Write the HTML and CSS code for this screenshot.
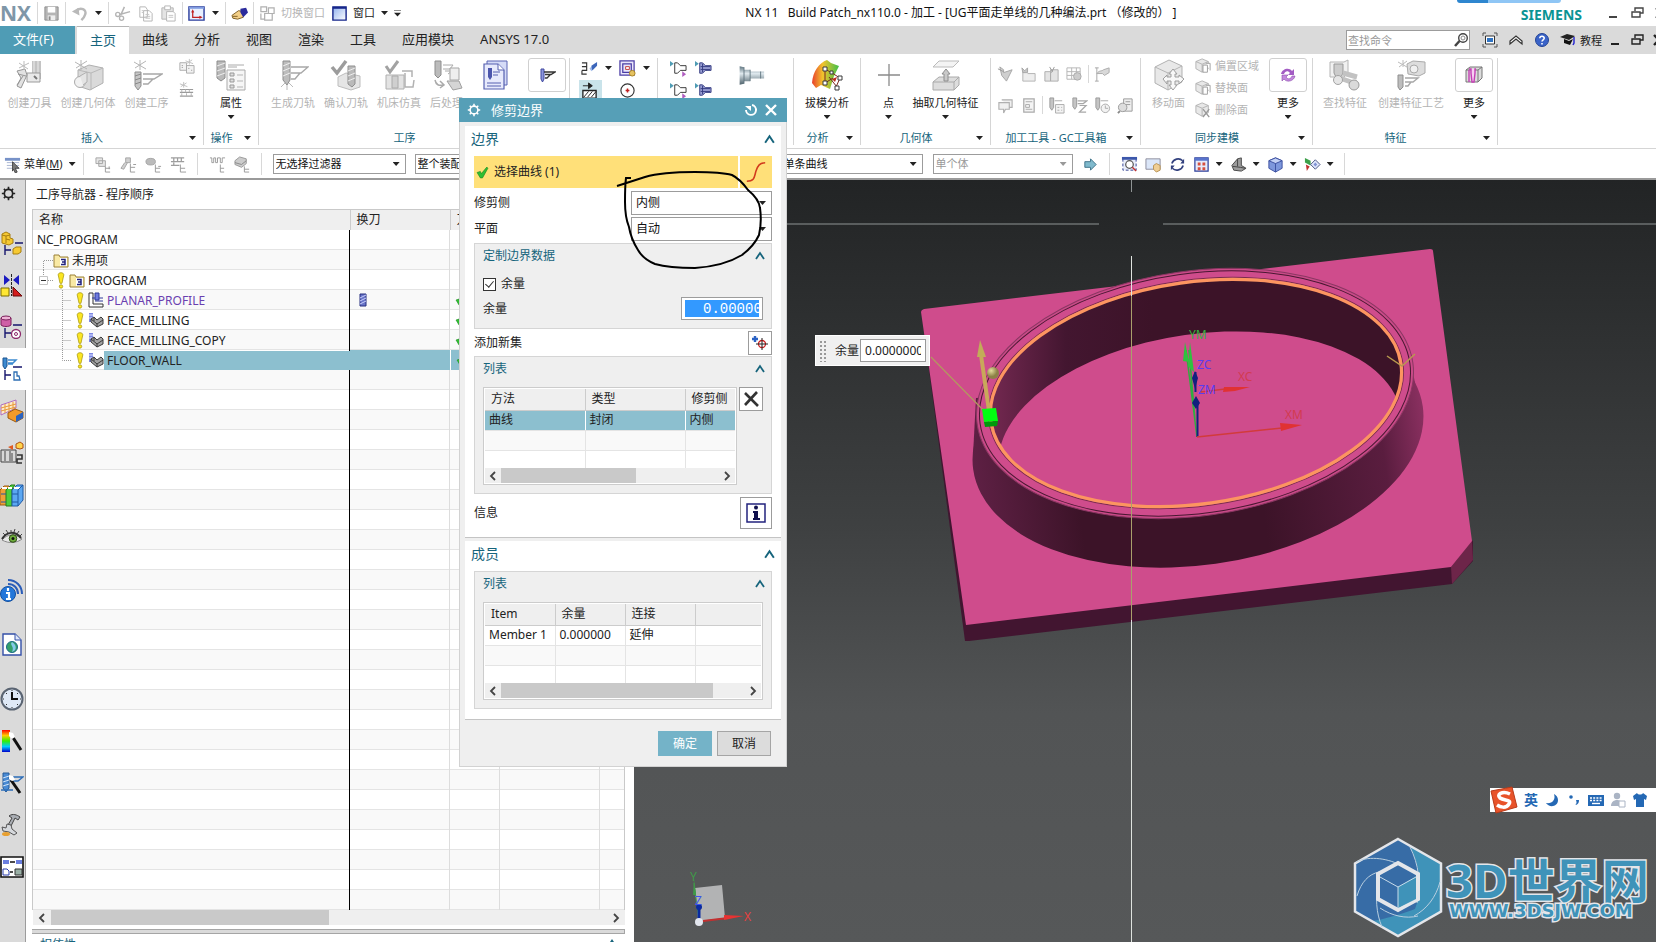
FILE: index.html
```html
<!DOCTYPE html>
<html lang="zh-CN">
<head>
    <meta charset="UTF-8">
    <meta name="viewport" content="width=device-width, initial-scale=1.0">
    <title>NX 11 - 加工</title>
    <link rel="stylesheet" href="styles.css">
</head>
<body>

<!-- Icon sprite -->
<svg class="sprite" aria-hidden="true">
    <defs>
        <linearGradient id="g-wall" x1="0" x2="1"><stop offset="0" stop-color="#5e2044"/><stop offset=".22" stop-color="#3c1328"/><stop offset=".62" stop-color="#3c1328"/><stop offset=".9" stop-color="#5a1d3f"/><stop offset="1" stop-color="#8a3060"/></linearGradient>
        <linearGradient id="g-inner" x1="0" x2="1"><stop offset="0" stop-color="#7a2b55"/><stop offset=".2" stop-color="#431630"/><stop offset=".4" stop-color="#3c1328"/><stop offset="1" stop-color="#3c1328"/></linearGradient>
        <linearGradient id="g-draft" x1="0" x2="1"><stop offset="0" stop-color="#e8402c"/><stop offset=".4" stop-color="#f2c32c"/><stop offset="1" stop-color="#3fc04a"/></linearGradient>
        <linearGradient id="g-rain" x1="0" y1="0" x2="0" y2="1"><stop offset="0" stop-color="#f00"/><stop offset=".25" stop-color="#fc0"/><stop offset=".5" stop-color="#3e0"/><stop offset=".75" stop-color="#0cf"/><stop offset="1" stop-color="#00c"/></linearGradient>
        <linearGradient id="g-steel" x1="0" y1="0" x2="0" y2="1"><stop offset="0" stop-color="#5f7580"/><stop offset=".4" stop-color="#dfe9ee"/><stop offset="1" stop-color="#4e626c"/></linearGradient>
        <linearGradient id="g-win" x1="0" y1="0" x2="1" y2="1"><stop offset="0" stop-color="#8fb0ee"/><stop offset="1" stop-color="#fff"/></linearGradient>
        <radialGradient id="g-ball" cx=".35" cy=".3"><stop offset="0" stop-color="#e4dc9c"/><stop offset="1" stop-color="#8d8146"/></radialGradient>
    </defs>

    <!-- title bar -->
    <symbol id="i-save" viewBox="0 0 18 18"><path d="M2 2h14v14H2z" fill="#b5b5b5" stroke="#8d8d8d"/><path d="M5 2h8v6H5z" fill="#fff"/><path d="M5 11h8v5H5z" fill="#eee"/><path d="M6 12h2v4H6z" fill="#8d8d8d"/></symbol>
    <symbol id="i-undo" viewBox="0 0 18 18"><path d="M5 7c5-6 12-2 10 3-.5 2-2 4-4 6" fill="none" stroke="#b9b9b9" stroke-width="2.600"/><path d="M1 7l7-4 1 8z" fill="#b9b9b9"/></symbol>
    <symbol id="i-cut" viewBox="0 0 18 18"><path d="M11 2L7 11M17 7L6 10" stroke="#b4b4b4" stroke-width="1.600" fill="none"/><circle cx="4" cy="10" r="2.200" fill="none" stroke="#b4b4b4" stroke-width="1.400"/><circle cx="8" cy="14" r="2.200" fill="none" stroke="#b4b4b4" stroke-width="1.400"/></symbol>
    <symbol id="i-copy" viewBox="0 0 18 18"><path d="M3 2h6l2 3v8H3zM7 6h6l3 3v8H7z" fill="#fff" stroke="#b4b4b4"/><path d="M9 10h4M9 12h5M9 14h5M5 6h2M5 8h2" stroke="#c4c4c4"/></symbol>
    <symbol id="i-paste" viewBox="0 0 18 18"><path d="M2 3h12v12H2z" fill="#e4e4e4" stroke="#b4b4b4"/><path d="M5 1h6v4H5z" fill="#fff" stroke="#b4b4b4"/><path d="M7 7h7l2 2v8H7z" fill="#fff" stroke="#b4b4b4"/><path d="M9 11h5M9 13h5" stroke="#c4c4c4"/></symbol>
    <symbol id="i-view" viewBox="0 0 18 18"><path d="M1 2h16v14H1z" fill="#e8f0ff" stroke="#2a3c9c" stroke-width="1.500"/><path d="M1 2h16v2H1z" fill="#7f9be0"/><path d="M5 6v7h8M4 8l1-2 1 2M12 12l2 1-2 1" fill="none" stroke="#c02020" stroke-width="1.300"/></symbol>
    <symbol id="i-hand" viewBox="0 0 18 18"><path d="M1 11l7-5 5 1v6l-6 2-5-1z" fill="#f3cf87" stroke="#7a5a20"/><path d="M10 4l6-1 2 5-5 5-3-5z" fill="#2b2b9c"/><path d="M2 12h5" stroke="#7a5a20"/></symbol>
    <symbol id="i-switch" viewBox="0 0 18 18"><path d="M2 2h6v5H2zM10 3h6v6h-6zM6 9h8v7H6zM2 9v6h4" fill="none" stroke="#b0b0b0" stroke-width="1.300"/></symbol>
    <symbol id="i-window" viewBox="0 0 18 18"><path d="M2 2h14v14H2z" fill="url(#g-win)" stroke="#16268a" stroke-width="1.500"/><path d="M2 2h14v2H2z" fill="#16268a"/></symbol>
    <symbol id="i-min" viewBox="0 0 14 14"><path d="M3 11h8" stroke="currentColor" stroke-width="2"/></symbol>
    <symbol id="i-restore" viewBox="0 0 14 14"><path d="M5 5V2h8v5h-3M2 6h8v5H2z" fill="none" stroke="currentColor" stroke-width="1.400"/></symbol>
    <symbol id="i-x" viewBox="0 0 14 14"><path d="M2 2l10 10M12 2L2 12" stroke="currentColor" stroke-width="2.400"/></symbol>
    <symbol id="i-find" viewBox="0 0 16 16"><circle cx="10" cy="6" r="4.300" fill="none" stroke="#444" stroke-width="1.400"/><circle cx="10" cy="6" r="2" fill="none" stroke="#888"/><path d="M6.500 9L2 14" stroke="#444" stroke-width="2.500"/></symbol>
    <symbol id="i-full" viewBox="0 0 16 16"><path d="M1 4V1h3M12 1h3v3M15 12v3h-3M4 15H1v-3" fill="none" stroke="#555"/><path d="M3.500 4h9v8h-9z" fill="#fff" stroke="#333"/><path d="M5 6h6v4H5z" fill="#2f74c4"/></symbol>
    <symbol id="i-up2" viewBox="0 0 16 16"><path d="M2 9l6-5 6 5v3L8 7l-6 5z" fill="#fff" stroke="#333" stroke-width="1.200"/></symbol>
    <symbol id="i-help" viewBox="0 0 16 16"><circle cx="8" cy="8" r="6.500" fill="#3a63c8" stroke="#234394"/><path d="M5.800 6.300c0-3 4.600-2.600 4.400 0-.1 1.500-2.200 1.500-2.200 3.200M8 11v1.600" fill="none" stroke="#fff" stroke-width="1.600"/></symbol>
    <symbol id="i-cap" viewBox="0 0 16 16"><path d="M0 5l7-3 8 2-6 4z" fill="#222"/><path d="M4 7v4l6 2 3-6-4 2z" fill="#111"/><path d="M14 5v6l-1 2" stroke="#2c2cd0" stroke-width="1.500" fill="none"/></symbol>

    <!-- ribbon, large -->
    <symbol id="i-tool" viewBox="0 0 32 32"><path d="M18 2h9v18h-9z" fill="#c4c4c4"/><path d="M20 2v12M24 2v12" stroke="#ececec"/><path d="M13 14h13v9H13z" fill="#e9e9e9" stroke="#9b9b9b"/><path d="M20 17l3 3" stroke="#777" stroke-width="2"/><path d="M3 12l8-2 2 6-6 13-4-2 4-8z" fill="#e2e2e2" stroke="#969696"/><path d="M4 15l8 2M3 26l6-9" stroke="#969696"/><path d="M10 2v9M5 4l9 6M15 4L5 9" stroke="#bbb"/></symbol>
    <symbol id="i-geom" viewBox="0 0 32 32"><path d="M6 11l11-5 14 3v15l-13 7L6 27z" fill="#dadada" stroke="#b0b0b0"/><path d="M6 11l13 3 12-5M19 14v17" stroke="#b8b8b8" fill="none"/><circle cx="8" cy="23" r="5.500" fill="#f1f1f1" stroke="#aaa"/><path d="M8 17l7-4v10l-4 3" fill="#e4e4e4" stroke="#b0b0b0"/><path d="M9 1v10M3 3l12 7M15 2L4 9" stroke="#b5b5b5"/></symbol>
    <symbol id="i-oper" viewBox="0 0 32 32"><path d="M4 13h6v14l-3 4-3-4z" fill="#c6c6c6" stroke="#8f8f8f"/><path d="M4 17l6-2M4 21l6-2M4 25l6-2" stroke="#888"/><path d="M12 15h19l-8 5H12M22 20l-5 5h-5" fill="none" stroke="#a8a8a8" stroke-width="1.400"/><path d="M9 1v10M3 3l12 7M15 2L4 9" stroke="#b5b5b5"/></symbol>
    <symbol id="i-attr" viewBox="0 0 32 32"><path d="M2 2h8v17l-4 3-4-3z" fill="#b9b9b9" stroke="#8c8c8c"/><path d="M2 7l8-3M2 12l8-3M2 17l8-3" stroke="#eee"/><path d="M13 6h16M13 8h9" stroke="#aaa"/><path d="M12 11h18v20H12z" fill="#f6f6f6" stroke="#aaa"/><path d="M15 14h4v3h-4zM15 20h4v3h-4zM15 26h4v3h-4z" fill="#ddd" stroke="#999"/><path d="M22 16h6M22 22h6M22 28h6" stroke="#b5b5b5"/></symbol>
    <symbol id="i-gen" viewBox="0 0 32 32"><path d="M6 2h7v19l-3 5-4-5z" fill="#bdbdbd" stroke="#8d8d8d"/><path d="M6 7l7-3M6 12l7-3M6 17l7-3" stroke="#eee"/><path d="M14 8h17l-7 6H14M23 14l-5 6h-4" fill="none" stroke="#a8a8a8" stroke-width="1.400"/><path d="M4 28l4-4M16 28l-4-4M10 26v5" stroke="#bbb"/></symbol>
    <symbol id="i-verify" viewBox="0 0 32 32"><path d="M8 18l8-4 14 3v11l-9 3-13-4z" fill="#e5e5e5" stroke="#bdbdbd"/><path d="M18 7h7v18l-3 3-4-3z" fill="#bababa" stroke="#8f8f8f"/><path d="M18 12l7-3M18 17l7-3M18 22l7-3" stroke="#eee"/><path d="M2 8l5 6 9-12" fill="none" stroke="#9c9c9c" stroke-width="3.500"/></symbol>
    <symbol id="i-sim" viewBox="0 0 32 32"><path d="M3 16h18v14H3z" fill="#e3e3e3" stroke="#b0b0b0"/><path d="M9 17h6v12H9z" fill="#cfcfcf" stroke="#aaa"/><path d="M22 14v14h8l1-7M19 12h10v6" stroke="#b2b2b2" fill="none" stroke-width="1.500"/><path d="M3 7l4 6 8-11" fill="none" stroke="#a2a2a2" stroke-width="3"/></symbol>
    <symbol id="i-post" viewBox="0 0 32 32"><path d="M4 2h6v14l-3 3-3-3z" fill="#bbb" stroke="#8d8d8d"/><path d="M12 6h10l-3 4h-7M14 12h7l-4 3" fill="none" stroke="#aaa"/><path d="M19 9h9v12h-9z" fill="#eee" stroke="#a5a5a5"/><path d="M16 22h12l3 7-9 2z" fill="#d5d5d5" stroke="#9f9f9f"/><path d="M4 21c1 5 4 6 8 5M9 22l4 4-4 3" fill="none" stroke="#aaa" stroke-width="1.500"/></symbol>
    <symbol id="i-report" viewBox="0 0 32 32"><path d="M8 2h20v24H8z" fill="#d5dbf7" stroke="#5a64b4"/><path d="M5 5h14l6 6v19H5z" fill="#e7eafc" stroke="#5660b0" stroke-width="1.200"/><path d="M19 5v6h6" fill="#fff" stroke="#5660b0"/><path d="M9 9h4v9l-2 3-2-3z" fill="#4c56ad"/><path d="M14 13h7M14 16h5M8 24h14M8 27h14" stroke="#5660b0"/></symbol>
    <symbol id="i-path" viewBox="0 0 18 18"><path d="M3 3h3v10l-1.500 3L3 13z" fill="#8c97dd" stroke="#4049a0"/><path d="M6 6h11l-4 2.500H7M12 9l-3 3H7" fill="none" stroke="#333" stroke-width="1.300"/></symbol>
    <symbol id="i-holder" viewBox="0 0 32 32"><path d="M3 6l5 1v3h7v2h16v8H15v3H8v3l-5 1z" fill="url(#g-steel)"/><path d="M8 7v19M15 10v13M27 12v8" stroke="#5d717b"/></symbol>
    <symbol id="i-draft" viewBox="0 0 32 32"><path d="M1 24C2 12 8 4 16 1l4 3 8 3-5 10-4 13-9-4-5 3z" fill="url(#g-draft)"/><path d="M14 10l7 4 8 5-4 9M14 10v14l8-5M18 18l8 10" fill="none" stroke="#7c2a1e"/><g fill="#fff" stroke="#3a3a3a"><path d="M12 8h4v4h-4zM19 12h3v3h-3zM12 22h4v4h-4zM27 17h4v4h-4zM24 27h4v4h-4z"/></g><path d="M21 20l5-2-2 5z" fill="#c02a1e"/></symbol>
    <symbol id="i-point" viewBox="0 0 32 32"><path d="M16 5v22M5 16h22" stroke="#8b8b8b" stroke-width="1.300"/></symbol>
    <symbol id="i-extract" viewBox="0 0 32 32"><path d="M9 2h20l-6 6H3z" fill="#f4f4f4" stroke="#bbb"/><path d="M3 23l6-5h20v8l-5 5H3z" fill="#ddd" stroke="#aaa"/><path d="M3 23h21l5-5M24 23v8" fill="none" stroke="#aaa"/><path d="M16 10l4 5h-2v7h-4v-7h-2z" fill="#c9c9c9" stroke="#8e8e8e"/></symbol>
    <symbol id="i-move" viewBox="0 0 32 32"><path d="M2 8l14-7 13 6v16l-14 8-13-7z" fill="#e8e8e8" stroke="#b1b1b1"/><path d="M2 8l13 6 14-7M15 14v17" fill="none" stroke="#b5b5b5"/><path d="M20 10l4 5h-2v3h4v-2l5 4-5 5v-3h-4v4h2l-4 5-4-5h2v-4h-4v3l-4-5 4-4v2h4v-3h-2z" fill="#f8f8f8" stroke="#9e9e9e"/></symbol>
    <symbol id="i-cycle" viewBox="0 0 18 18"><path d="M2 8c1-5 8-7 11-3l2-2v6H9l2-2C9 4 6 5 5 8z" fill="#a35cc4"/><path d="M16 10c-1 5-8 7-11 3l-2 2V9h6l-2 2c2 3 5 2 6-1z" fill="#c489dd" stroke="#8c4bad" stroke-width=".6"/></symbol>
    <symbol id="i-feat" viewBox="0 0 18 18"><path d="M1 4l4-3h12v11l-4 4H1z" fill="#dcdcdc" stroke="#777"/><path d="M1 4h12v12M13 4l4-3" fill="none" stroke="#777"/><path d="M4 3h2v4l1 9h2l1-9V3h1M4 16V4" fill="#f7d0f3" stroke="#c43fb4" stroke-width="1.400"/></symbol>
    <symbol id="i-findf" viewBox="0 0 32 32"><path d="M1 3h14l4-2v13l-4 4H1z" fill="#f1f1f1" stroke="#b5b5b5"/><path d="M5 5h9v9l-2 4H7l-2-4z" fill="#ccc" stroke="#999"/><path d="M8 18l14 5M14 14l14 4" stroke="#c2c2c2" stroke-width="5"/><circle cx="9" cy="21" r="4.500" fill="#e6e6e6" stroke="#a2a2a2"/><circle cx="25" cy="26" r="5" fill="#dadada" stroke="#9a9a9a"/></symbol>
    <symbol id="i-featp" viewBox="0 0 32 32"><path d="M12 5l6-3 12 1v11l-6 3-11-2z" fill="#ddd" stroke="#aaa"/><circle cx="19" cy="10" r="4" fill="#f0f0f0" stroke="#aaa"/><path d="M8 1v7M3 3l9 5M12 2L4 8" stroke="#bbb"/><path d="M3 16h5v12l-3 3-2-3z" fill="#bdbdbd" stroke="#8f8f8f"/><path d="M10 19h13l-5 4h-8M16 23l-3 4h-3" fill="none" stroke="#a8a8a8" stroke-width="1.400"/></symbol>

    <!-- ribbon, small -->
    <symbol id="s-copyg" viewBox="0 0 18 18"><path d="M2 5h7v8H2zM9 8h8v8H9z" fill="#f2f2f2" stroke="#aaa"/><path d="M4 8h1M4 10h1M11 11h1M14 13h1" stroke="#888"/><path d="M12 1v6M8 3l8 3M15 2L9 6" stroke="#c0c0c0"/></symbol>
    <symbol id="s-meth" viewBox="0 0 18 18"><path d="M2 9h14M2 12h14M2 16h14" stroke="#9a9a9a" stroke-width="1.300"/><path d="M4 9v3M8 9v3M12 9v3M4 13v3M9 13v3M14 13v3" stroke="#b5b5b5"/><path d="M6 1v6M2 3l8 3M9 2L3 6" stroke="#c0c0c0"/></symbol>
    <symbol id="s-edit" viewBox="0 0 18 18"><path d="M1 3h5v4H1M6 7v4H1M1 11v4h5" fill="none" stroke="#333" stroke-width="1.200"/><path d="M9 9l3-3 2 2-3 4z" fill="#9db9ea"/><path d="M11 6l6-4v4l-5 5z" fill="#3c66ba"/></symbol>
    <symbol id="s-spiral" viewBox="0 0 18 18"><path d="M1 1h15v15H1zM4 4h9v9H4z" fill="#e9e6fa" stroke="#4a3ca5" stroke-width="1.300"/><path d="M7 7h4v3H7z" fill="#fff" stroke="#c23a3a"/><circle cx="14" cy="14" r="3" fill="#e5c261" stroke="#a88225"/></symbol>
    <symbol id="s-hatch" viewBox="0 0 18 18"><path d="M2 4h9M8 1l4 3-4 3z" stroke="#222" fill="#222"/><path d="M2 9h14v8H2z" fill="#fff" stroke="#222" stroke-width="1.400"/><path d="M3 16l5-6M7 16l5-6M11 16l5-6" stroke="#222"/></symbol>
    <symbol id="s-target" viewBox="0 0 18 18"><circle cx="9" cy="9" r="7" fill="#fff" stroke="#333" stroke-width="1.200"/><path d="M7 9h4M9 7v4" stroke="#c02020" stroke-width="1.600"/></symbol>
    <symbol id="s-cut1" viewBox="0 0 18 18"><path d="M5 3h3l3 3h6v5h-6l-3 3H5z" fill="#fff" stroke="#333"/><path d="M0 1l4 3-4 3z" fill="#4f9cb4"/><path d="M13 12l4 3-4 3z" fill="#b05cc0"/></symbol>
    <symbol id="s-cut2" viewBox="0 0 18 18"><path d="M5 3h3l3 3h6v5h-6l-3 3H5z" fill="#9a9fd4" stroke="#333a80"/><path d="M6 7h10M6 10h10M8 4v9" stroke="#333a80"/><path d="M0 1l4 3-4 3z" fill="#4f9cb4"/></symbol>
    <symbol id="s-g1" viewBox="0 0 18 18"><path d="M3 1l4 3v3l9-3-6 12-5-6z" fill="#cfcfcf" stroke="#a5a5a5"/><path d="M1 3l6 3" fill="none" stroke="#999"/></symbol>
    <symbol id="s-g2" viewBox="0 0 18 18"><path d="M3 6v10h13V8H8" fill="#eee" stroke="#b2b2b2"/><path d="M2 2l3 3 3-3v5H3z" fill="#c4c4c4" stroke="#a5a5a5"/></symbol>
    <symbol id="s-g3" viewBox="0 0 18 18"><path d="M2 6h6v10H2zM8 4h8v12H8z" fill="#e4e4e4" stroke="#adadad"/><path d="M7 1l3 5M12 1l-3 6" stroke="#999"/></symbol>
    <symbol id="s-g4" viewBox="0 0 18 18"><path d="M1 2h14v12H1zM1 6h14M1 10h14M6 2v12M11 2v12" fill="none" stroke="#b5b5b5"/><circle cx="12" cy="11" r="4" fill="#ccc" stroke="#aaa"/></symbol>
    <symbol id="s-g5" viewBox="0 0 18 18"><path d="M3 2v14M1 2h4M1 16h4" stroke="#a5a5a5" fill="none"/><path d="M3 8c3-4 5-2 7-4l6-2v5l-5 3-2-2z" fill="#d9d9d9" stroke="#aaa"/></symbol>
    <symbol id="s-g6" viewBox="0 0 18 18"><path d="M5 3h11v8h-3M2 6h11v7H9l-2 4v-4H2z" fill="#f0f0f0" stroke="#b0b0b0" stroke-width="1.200"/></symbol>
    <symbol id="s-g7" viewBox="0 0 18 18"><path d="M4 2h11v14H4z" fill="#f4f4f4" stroke="#aaa" stroke-width="1.300"/><path d="M6 5h7M6 8h4v3H6zM6 13h7" stroke="#aaa" fill="none"/></symbol>
    <symbol id="s-g8" viewBox="0 0 18 18"><path d="M2 1h4v10l-2 3-2-3z" fill="#c4c4c4" stroke="#999"/><path d="M8 8h9v9H8z" fill="#f3f3f3" stroke="#aaa"/><path d="M10 11h2M14 11h1M10 14h2M14 14h1M7 4h8" stroke="#aaa"/></symbol>
    <symbol id="s-g9" viewBox="0 0 18 18"><path d="M2 1h4v10l-2 3-2-3z" fill="#c4c4c4" stroke="#999"/><circle cx="12" cy="12" r="4.500" fill="#f3f3f3" stroke="#aaa"/><path d="M12 9v3h3M7 4h8" stroke="#aaa" fill="none"/></symbol>
    <symbol id="s-g10" viewBox="0 0 18 18"><path d="M7 2h9v13H7z" fill="#eee" stroke="#999"/><path d="M9 5h5M9 8h5" stroke="#999"/><circle cx="6" cy="11" r="4.500" fill="#ddd" stroke="#9a9a9a"/><path d="M3 15l-2 2" stroke="#888" stroke-width="2"/></symbol>
    <symbol id="s-g11" viewBox="0 0 18 18"><path d="M2 1h4v9l-2 3-2-3z" fill="#c4c4c4" stroke="#999"/><path d="M7 4h10l-4 3H7M9 9h7l-4 4M12 13l-3 3h7" fill="none" stroke="#a8a8a8" stroke-width="1.300"/></symbol>
    <symbol id="s-face" viewBox="0 0 18 18"><path d="M1 4l7-3 7 3v8l-7 4-7-4z" fill="#e8e8e8" stroke="#b0b0b0"/><path d="M1 4l7 3 7-3M8 7v9" fill="none" stroke="#b0b0b0"/><path d="M9 8h5v8H9zM12 6h5v8" fill="#fff" stroke="#999"/></symbol>
    <symbol id="s-facex" viewBox="0 0 18 18"><path d="M1 4l7-3 7 3v8l-7 4-7-4z" fill="#e8e8e8" stroke="#b0b0b0"/><path d="M1 4l7 3 7-3M8 7v9" fill="none" stroke="#b0b0b0"/><path d="M9 8l7 9M16 8l-7 9" stroke="#999" stroke-width="1.500"/></symbol>

    <!-- selection bar -->
    <symbol id="s-menu" viewBox="0 0 18 18"><path d="M1 2h16v3H1z" fill="#7792c8"/><path d="M3 7h13M3 10h13M3 13h13" stroke="#a8b4d0"/><path d="M9 6l7 7h-4l2 4-2 1-2-4-1 2z" fill="#777" stroke="#333" stroke-width=".8"/></symbol>
    <symbol id="s-tree1" viewBox="0 0 18 18"><path d="M1 2h7v6H1zM4 5h7v6H4z" fill="#e6e6e6" stroke="#a5a5a5"/><path d="M11 11v6h5M11 13h5M15 11v3" fill="none" stroke="#999"/></symbol>
    <symbol id="s-tree2" viewBox="0 0 18 18"><path d="M6 2h5v5H6zM5 7l-4 6 3 1 4-7" fill="#d0d0d0" stroke="#a5a5a5"/><path d="M11 8v9h5M11 12h5M14 9h3" fill="none" stroke="#999"/></symbol>
    <symbol id="s-tree3" viewBox="0 0 18 18"><ellipse cx="6" cy="6" rx="5" ry="3.500" fill="#bbb" stroke="#a5a5a5"/><path d="M11 9v8h5M11 13h5M14 11h3" fill="none" stroke="#999"/></symbol>
    <symbol id="s-tree4" viewBox="0 0 18 18"><path d="M1 2h14M1 6h14M1 10h9M4 2v4M8 2v4M12 2v4M4 7v3" fill="none" stroke="#9d9d9d" stroke-width="1.300"/><path d="M11 9v8h6M11 13h5" fill="none" stroke="#999"/></symbol>
    <symbol id="s-wave" viewBox="0 0 18 18"><path d="M1 2h2v5h2V2h2v5h2V2h3v5h2V2h3" fill="none" stroke="#999"/><path d="M12 9v8h4M12 13h4" fill="none" stroke="#999"/></symbol>
    <symbol id="s-stack" viewBox="0 0 18 18"><path d="M1 5l5-4 7 2v5l-5 4-7-3z" fill="#ccc" stroke="#999"/><path d="M1 7l7 2 5-4" fill="none" stroke="#888"/><path d="M11 11v6h5M11 14h5" fill="none" stroke="#999"/></symbol>
    <symbol id="s-go" viewBox="0 0 18 18"><path d="M3 6h6V3l6 6-6 6v-3H3z" fill="#7fb9cc" stroke="#3e7288"/></symbol>
    <symbol id="s-fit" viewBox="0 0 18 18"><path d="M2 2h14v13H2z" fill="#e7ecfa" stroke="#2f3f90" stroke-dasharray="3 2"/><path d="M1 1h16v3H1z" fill="#3c57ab"/><circle cx="9" cy="9" r="4" fill="#fff" stroke="#555" stroke-width="1.300"/><path d="M12 12l4 4" stroke="#c03030" stroke-width="1.500"/></symbol>
    <symbol id="s-pan" viewBox="0 0 18 18"><path d="M1 3h15v11H1z" fill="#dbe6f8" stroke="#8b8b9b"/><path d="M9 10l3-2 4 2v5l-4 2-3-3z" fill="#efce94" stroke="#b89252"/></symbol>
    <symbol id="s-rot" viewBox="0 0 18 18"><path d="M14.500 5A7 7 0 0 0 3 8M3.500 13A7 7 0 0 0 15 10" fill="none" stroke="#32407e" stroke-width="1.700"/><path d="M16 3v5h-4zM2 15v-5h4z" fill="#32407e"/></symbol>
    <symbol id="s-tile" viewBox="0 0 18 18"><path d="M2 2h14v14H2z" fill="#e6ecfc" stroke="#2c3f9b" stroke-width="1.300"/><path d="M2 2h14v3H2z" fill="#5873cc"/><path d="M5 7h3v3H5zM10 7h3v3h-3zM5 12h3v3H5zM10 12h3v3h-3z" fill="#d65040"/></symbol>
    <symbol id="s-shade" viewBox="0 0 18 18"><path d="M2 10l6-7 4-1v8l5 3-5 3-8-1z" fill="#9d9d9d" stroke="#444"/><path d="M3 11l8 1 5 1M8 3v8" fill="none" stroke="#444"/></symbol>
    <symbol id="s-cube" viewBox="0 0 18 18"><path d="M2 5l7-3 7 3v8l-7 4-7-4z" fill="#7d97dc" stroke="#3b50a0"/><path d="M2 5l7 3 7-3-7-3z" fill="#c3d1f5" stroke="#3b50a0"/><path d="M9 8v9" stroke="#3b50a0"/></symbol>
    <symbol id="s-clip" viewBox="0 0 18 18"><path d="M1 2l6 3v5L1 7z" fill="#3ca04a"/><path d="M2 9l4 2-3 5z" fill="#c03030"/><path d="M7 9l5-5 5 5-5 5z" fill="#dfe6fb" stroke="#46537f"/><path d="M10 9l2-2 2 2-2 2z" fill="#7f92d3"/></symbol>

    <!-- resource bar -->
    <symbol id="r-gear" viewBox="0 0 18 18"><circle cx="9" cy="9" r="5" fill="none" stroke="currentColor" stroke-width="2"/><path d="M9 1v3M9 14v3M1 9h3M14 9h3M3.500 3.500l2 2M12.500 12.500l2 2M14.500 3.500l-2 2M5.500 12.500l-2 2" stroke="currentColor" stroke-width="2"/></symbol>
    <symbol id="r-asm" viewBox="0 0 24 24"><path d="M2 3l4-2 4 2v4l3 1v4l-4 2-7-2z" fill="#f6c933" stroke="#a77e10"/><path d="M2 4l4 1 4-1M6 5v7M6 8l4 1" stroke="#a77e10" fill="none"/><path d="M15 12h8M5 14v10M5 19h6" stroke="#16166e" stroke-width="1.400"/><path d="M13 18l3-2h5v5l-3 2h-5z" fill="#f6c933" stroke="#a77e10"/></symbol>
    <symbol id="r-cons" viewBox="0 0 24 24"><path d="M4 2l6 5-6 5zM19 2l-6 5 6 5z" fill="#1a1ac0"/><path d="M11.500 1v22" stroke="#222" stroke-dasharray="3 1"/><path d="M1 15h8v8H1z" fill="#ffe733" stroke="#7a6b00"/><path d="M13 14l9 9h-9z" fill="#d41c1c" stroke="#6a0909"/></symbol>
    <symbol id="r-part" viewBox="0 0 24 24"><path d="M1 3v7c2 2 8 2 10 0V3z" fill="#cf5fa6" stroke="#7a1f5a"/><ellipse cx="6" cy="3" rx="5" ry="2" fill="#eeb3d6" stroke="#7a1f5a"/><path d="M13 10h9M5 13v10M5 18h6" stroke="#16166e" stroke-width="1.400"/><circle cx="16" cy="19" r="4.500" fill="#fff" stroke="#8c2a6c" stroke-width="1.300"/><circle cx="16" cy="19" r="1.500" fill="none" stroke="#8c2a6c"/></symbol>
    <symbol id="r-op" viewBox="0 0 24 24"><path d="M3 1h4v8l-2 3-2-3z" fill="#3c8ad0" stroke="#1d5590"/><path d="M8 3h8l-3 3H8M13 7H8" stroke="#3c8ad0" stroke-width="1.500" fill="none"/><path d="M13 10h9M5 13v10M5 18h6" stroke="#16166e" stroke-width="1.400"/><path d="M14 15v8h6l-1-4h-2v-4z" fill="#fff" stroke="#2f6fb4" stroke-width="1.300"/></symbol>
    <symbol id="r-mach" viewBox="0 0 24 24"><path d="M1 6l15-5v8L1 16z" fill="#fdeccb" stroke="#b06ec0"/><path d="M1 9l15-4M1 12l15-4M5 5v9M9 4v9M13 3v8" stroke="#e89a3a"/><path d="M8 14l7-4 8 3v6l-7 4-8-4z" fill="#f39a2a" stroke="#9b5a10"/><path d="M16 17l7-4v6l-7 4z" fill="#2a63c0"/></symbol>
    <symbol id="r-cell" viewBox="0 0 24 24"><path d="M1 9h15v12H1z" fill="#d8d8d8" stroke="#444"/><path d="M5 10v10M10 10v10M12 12v8" stroke="#444"/><path d="M17 14h5v4h-5v4h5" fill="none" stroke="#333" stroke-width="1.600"/><path d="M16 3l4-2 3 2v4l-3 1-4-1z" fill="#ffd34a" stroke="#b05010"/><path d="M8 6l5-2v5z" fill="#e05a20"/></symbol>
    <symbol id="r-book" viewBox="0 0 24 24"><path d="M0 7l4-4h5v19H0z" fill="#f0a038" stroke="#9b5a10"/><path d="M6 7l5-5h4l-3 4v17H6z" fill="#4ccf3c" stroke="#247a1a"/><path d="M12 7l5-5h6v15l-5 6h-6z" fill="#5ba7f2" stroke="#1f5aa6"/><path d="M2 5h5M8 5h4M14 5h6" stroke="#fff" stroke-width="2"/><path d="M18 7l5-5M18 7v16M12 11h6M12 19h6M1 11h5M1 19h5" stroke="#1f5aa6" fill="none"/></symbol>
    <symbol id="r-eye" viewBox="0 0 24 24"><path d="M2 15c5-6 13-7 20-1-5 4-13 5-20 1z" fill="#e8e8e8" stroke="#888"/><circle cx="13" cy="13.500" r="3.800" fill="#6fae3c" stroke="#2f4d18"/><circle cx="13" cy="13.500" r="1.500" fill="#111"/><path d="M2 14C7 6 15 6 21 13" fill="none" stroke="#333" stroke-width="2"/><path d="M5 10L3 8M8 8L6 5M11 7V5M14 7l1-3M17 9l2-3M20 11l2-2" stroke="#444"/></symbol>
    <symbol id="r-info" viewBox="0 0 24 24"><circle cx="8" cy="15" r="7.500" fill="#2477da" stroke="#1450a0"/><path d="M8 9v3M6 14h3v6M6 20h5" stroke="#fff" stroke-width="2.200" fill="none"/><path d="M8 5c6 0 10 4 10 10M8 1c8 0 14 6 14 14" fill="none" stroke="#2a5cb8" stroke-width="2"/></symbol>
    <symbol id="r-web" viewBox="0 0 24 24"><path d="M3 1h12l6 6v15H3z" fill="#fff" stroke="#3450a8" stroke-width="1.400"/><path d="M15 1v6h6" fill="#dfe8fb" stroke="#3450a8"/><circle cx="12" cy="14" r="5.500" fill="#35a06a" stroke="#1b6a86"/><path d="M12 9c-3 3 3 4 0 10 6-2 4-8 0-10z" fill="#86c9ea"/></symbol>
    <symbol id="r-clock" viewBox="0 0 24 24"><circle cx="12" cy="12" r="10.500" fill="#dfe9f6" stroke="#5a6472" stroke-width="2"/><path d="M12 5v7h6" fill="none" stroke="#111" stroke-width="2"/><path d="M12 3v1M12 20v1M3 12h1M20 12h1M6 6l1 1M18 18l-1-1M6 18l1-1M18 6l-1 1" stroke="#333"/></symbol>
    <symbol id="r-color" viewBox="0 0 24 24"><path d="M2 1h8v22H2z" fill="url(#g-rain)"/><path d="M12 7l9 14" stroke="#111" stroke-width="3"/><path d="M9 3l4 1 2 4-3 2-3-3z" fill="#fff"/></symbol>
    <symbol id="r-wiz" viewBox="0 0 24 24"><path d="M3 2h6v15l-3 4-3-4z" fill="#4a8bd4" stroke="#245a98"/><path d="M3 7l6-2M3 11l6-2M3 15l6-2" stroke="#cfe3f8"/><path d="M10 6h13l-5 4h-8M1 19h12" stroke="#2d6db8" stroke-width="1.400" fill="none"/><path d="M11 9l9 13" stroke="#111" stroke-width="3"/><path d="M9 4l4 1 2 4-3 1-3-2z" fill="#fff"/></symbol>
    <symbol id="r-tools" viewBox="0 0 24 24"><path d="M9 3c4-3 8-1 11 1l-2 3-3-2-4 8-3-1 4-7z" fill="#a9adb3" stroke="#444"/><path d="M2 14l4 1 1-4 4 1 1 4 5 4-3 2-5-3-6-1z" fill="#d5d8dc" stroke="#555"/><ellipse cx="6" cy="21" rx="4" ry="2" fill="#e8a030"/></symbol>
    <symbol id="r-layout" viewBox="0 0 24 24"><path d="M1 2h22v20H1z" fill="#fff" stroke="#111" stroke-width="1.600"/><path d="M3 5h6v4H3zM16 5h6v4h-6z" fill="#6b7fe0"/><path d="M10 7h5M10 17h3" stroke="#111" stroke-width="1.400"/><path d="M3 14h4l2 2v4H3z" fill="#fff" stroke="#2b3fae"/><path d="M15 14h7v6h-7z" fill="#9ab0a6" stroke="#333"/></symbol>

    <!-- tree -->
    <symbol id="t-warn" viewBox="0 0 8 18"><path d="M1 3c0-3 6-3 6 0L5 12H3z" fill="#fbe622" stroke="#a8960a" stroke-width=".8"/><circle cx="4" cy="15.300" r="1.800" fill="#fbe622" stroke="#a8960a" stroke-width=".8"/></symbol>
    <symbol id="t-folder" viewBox="0 0 16 16"><path d="M1 3h5l1 2h8v10H1z" fill="#f9e9a4" stroke="#9a8038"/><path d="M7 6h7v8H7z" fill="#fff"/><path d="M8 7.500h4v5H8M9 10h3" fill="none" stroke="#23237e" stroke-width="1.500"/></symbol>
    <symbol id="t-planar" viewBox="0 0 16 16"><path d="M1 1v14h14v-3H5V1z" fill="#fff" stroke="#333"/><path d="M7 1h4v7H7z" fill="#6f7be0" stroke="#2f3a9a"/><path d="M4 6h3M11 6h4M7 9h8" stroke="#2f3a9a"/></symbol>
    <symbol id="t-face" viewBox="0 0 16 16"><path d="M1 1h4v9H1z" fill="#7d88e4"/><path d="M1 3h4M1 6h4" stroke="#dfe3ff"/><path d="M3 7l3-2 3 3 4-3 2 2v5l-6 3-6-5z" fill="#a3a3a3" stroke="#3a3a3a"/><path d="M3 7l6 5 6-4M9 12v3M6 5v4" fill="none" stroke="#3a3a3a"/></symbol>
    <symbol id="t-chg" viewBox="0 0 8 14"><path d="M1 1h6v12H1z" fill="#6874c8" stroke="#262f7e"/><path d="M1 5l6-3M1 8l6-3M1 11l6-3" stroke="#c9cffb"/></symbol>
    <symbol id="t-ok" viewBox="0 0 12 12"><path d="M1 6l3-1 1 2 5-6 1 1-5 9H4z" fill="#2fbf32" stroke="#1c8a20" stroke-width=".6"/></symbol>

    <!-- dialog -->
    <symbol id="d-up" viewBox="0 0 12 12"><path d="M2 9l4-6 4 6" fill="none" stroke="#16647c" stroke-width="1.800"/></symbol>
    <symbol id="d-left" viewBox="0 0 12 12"><path d="M8 2L4 6l4 4" fill="none" stroke="#444" stroke-width="1.800"/></symbol>
    <symbol id="d-right" viewBox="0 0 12 12"><path d="M4 2l4 4-4 4" fill="none" stroke="#444" stroke-width="1.800"/></symbol>
    <symbol id="d-reset" viewBox="0 0 14 14"><path d="M8 2a5 5 0 1 1-6 5" fill="none" stroke="#fff" stroke-width="1.900"/><path d="M1 3h6v5z" fill="#fff"/></symbol>
    <symbol id="d-curve" viewBox="0 0 24 24"><path d="M2 22c9 0 8-5 10-11S16 2 22 2" fill="none" stroke="#d23a1c" stroke-width="1.700"/></symbol>
    <symbol id="d-add" viewBox="0 0 18 18"><path d="M1 5h6M4 2v6" stroke="#2a62c4" stroke-width="2.400"/><circle cx="11" cy="10" r="3.500" fill="none" stroke="#d02020" stroke-width="1.300"/><path d="M5 10h12M11 4v12" stroke="#222"/></symbol>
    <symbol id="d-info" viewBox="0 0 20 20"><path d="M1 1h18v18H1z" fill="#fff" stroke="#23237e" stroke-width="1.500"/><circle cx="10" cy="4.600" r="2" fill="#10104e"/><path d="M7 8h5v7h2v2H7v-2h1v-5H7z" fill="#10104e"/></symbol>
    <symbol id="d-del" viewBox="0 0 18 18"><path d="M3 3l13 13M15 2L3 15" stroke="#333" stroke-width="2.600"/></symbol>
</svg>

<!-- Title bar -->
<header class="titlebar">
    <span class="brand">NX</span>
    <span class="sep"></span>
    <button class="qa" aria-label="保存"><svg><use href="#i-save"/></svg></button>
    <span class="sep"></span>
    <button class="qa" aria-label="撤销"><svg><use href="#i-undo"/></svg></button>
    <span class="caret wide"></span>
    <span class="sep"></span>
    <button class="qa" aria-label="剪切"><svg><use href="#i-cut"/></svg></button>
    <button class="qa" aria-label="复制"><svg><use href="#i-copy"/></svg></button>
    <button class="qa" aria-label="粘贴"><svg><use href="#i-paste"/></svg></button>
    <span class="sep"></span>
    <button class="qa" aria-label="视图"><svg><use href="#i-view"/></svg></button>
    <span class="caret wide"></span>
    <span class="sep"></span>
    <button class="qa" aria-label="触控"><svg><use href="#i-hand"/></svg></button>
    <span class="sep"></span>
    <button class="qa text dim"><svg><use href="#i-switch"/></svg>切换窗口</button>
    <button class="qa text"><svg><use href="#i-window"/></svg>窗口</button>
    <span class="caret"></span>
    <span class="caret bar"></span>
    <h1>NX 11 &nbsp; Build Patch_nx110.0 - 加工 - [UG平面走单线的几种编法.prt （修改的） ]</h1>
    <span class="siemens">SIEMENS</span>
    <span class="winbtns">
        <button aria-label="最小化"><svg><use href="#i-min"/></svg></button>
        <button aria-label="还原"><svg><use href="#i-restore"/></svg></button>
        <button aria-label="关闭"><svg><use href="#i-x"/></svg></button>
    </span>
    <span class="progress"></span>
</header>

<!-- Tabs -->
<nav class="tabs">
    <a href="#" class="file">文件(F)</a>
    <a href="#" class="active">主页</a>
    <a href="#">曲线</a>
    <a href="#">分析</a>
    <a href="#">视图</a>
    <a href="#">渲染</a>
    <a href="#">工具</a>
    <a href="#">应用模块</a>
    <a href="#">ANSYS 17.0</a>
    <div class="tabs-right">
        <label class="search"><input type="text" placeholder="查找命令" aria-label="查找命令"><svg><use href="#i-find"/></svg></label>
        <button aria-label="全屏"><svg><use href="#i-full"/></svg></button>
        <button aria-label="最小化功能区"><svg><use href="#i-up2"/></svg></button>
        <button aria-label="帮助"><svg><use href="#i-help"/></svg></button>
        <button class="tutorial"><svg><use href="#i-cap"/></svg>教程</button>
        <span class="winbtns">
            <button aria-label="最小化"><svg><use href="#i-min"/></svg></button>
            <button aria-label="还原"><svg><use href="#i-restore"/></svg></button>
            <button aria-label="关闭"><svg><use href="#i-x"/></svg></button>
        </span>
    </div>
</nav>

<!-- Ribbon -->
<div class="ribbon">
    <section class="group g-insert">
        <div class="tools">
            <button class="big dim"><svg><use href="#i-tool"/></svg>创建刀具</button>
            <button class="big dim"><svg><use href="#i-geom"/></svg>创建几何体</button>
            <button class="big dim"><svg><use href="#i-oper"/></svg>创建工序</button>
            <div class="stack">
                <button class="small" aria-label="创建程序"><svg><use href="#s-copyg"/></svg></button>
                <button class="small" aria-label="创建方法"><svg><use href="#s-meth"/></svg></button>
            </div>
        </div>
        <footer><span>插入</span><i class="caret"></i></footer>
    </section>
    <section class="group g-action">
        <div class="tools">
            <button class="big"><svg><use href="#i-attr"/></svg>属性<i class="caret"></i></button>
        </div>
        <footer><span>操作</span><i class="caret"></i></footer>
    </section>
    <section class="group g-oper">
        <div class="tools">
            <button class="big dim"><svg><use href="#i-gen"/></svg>生成刀轨</button>
            <button class="big dim"><svg><use href="#i-verify"/></svg>确认刀轨</button>
            <button class="big dim"><svg><use href="#i-sim"/></svg>机床仿真</button>
            <button class="big dim"><svg><use href="#i-post"/></svg>后处理</button>
            <button class="big report" aria-label="车间文档"><svg><use href="#i-report"/></svg></button>
            <button class="big" aria-label="更多"><span class="box"><svg><use href="#i-path"/></svg></span></button>
        </div>
        <footer><span>工序</span><i class="caret"></i></footer>
    </section>
    <section class="group g-show">
        <div class="tools grid">
            <button class="small" aria-label="编辑显示"><svg><use href="#s-edit"/></svg><i class="caret"></i></button>
            <button class="small" aria-label="区域"><svg><use href="#s-spiral"/></svg><i class="caret"></i></button>
            <button class="small pressed" aria-label="切削"><svg><use href="#s-hatch"/></svg></button>
            <button class="small" aria-label="中心"><svg><use href="#s-target"/></svg></button>
        </div>
        <footer><span>显示</span><i class="caret"></i></footer>
    </section>
    <section class="group g-ipw">
        <div class="tools">
            <div class="grid">
                <button class="small" aria-label="刀具一"><svg><use href="#s-cut1"/></svg></button>
                <button class="small" aria-label="刀具二"><svg><use href="#s-cut2"/></svg></button>
                <button class="small" aria-label="刀具三"><svg><use href="#s-cut1"/></svg></button>
                <button class="small" aria-label="刀具四"><svg><use href="#s-cut2"/></svg></button>
            </div>
            <button class="big" aria-label="刀柄"><svg><use href="#i-holder"/></svg></button>
        </div>
        <footer><span>工件</span><i class="caret"></i></footer>
    </section>
    <section class="group g-analysis">
        <div class="tools">
            <button class="big"><svg><use href="#i-draft"/></svg>拔模分析<i class="caret"></i></button>
        </div>
        <footer><span>分析</span><i class="caret"></i></footer>
    </section>
    <section class="group g-geom">
        <div class="tools">
            <button class="big"><svg><use href="#i-point"/></svg>点<i class="caret"></i></button>
            <button class="big"><svg><use href="#i-extract"/></svg>抽取几何特征<i class="caret"></i></button>
        </div>
        <footer><span>几何体</span><i class="caret"></i></footer>
    </section>
    <section class="group g-gc">
        <div class="tools rows">
            <div class="row">
                <button class="small" aria-label="检查"><svg><use href="#s-g1"/></svg></button>
                <button class="small" aria-label="部件"><svg><use href="#s-g2"/></svg></button>
                <button class="small" aria-label="毛坯"><svg><use href="#s-g3"/></svg></button>
                <button class="small" aria-label="表格"><svg><use href="#s-g4"/></svg></button>
                <span class="sep"></span>
                <button class="small" aria-label="测量"><svg><use href="#s-g5"/></svg></button>
            </div>
            <div class="row">
                <button class="small" aria-label="注释"><svg><use href="#s-g6"/></svg></button>
                <button class="small" aria-label="工艺卡"><svg><use href="#s-g7"/></svg></button>
                <span class="sep"></span>
                <button class="small" aria-label="参数"><svg><use href="#s-g8"/></svg></button>
                <button class="small" aria-label="刀轨"><svg><use href="#s-g11"/></svg></button>
                <button class="small" aria-label="时间"><svg><use href="#s-g9"/></svg></button>
                <button class="small" aria-label="报告"><svg><use href="#s-g10"/></svg></button>
            </div>
        </div>
        <footer><span>加工工具 - GC工具箱</span><i class="caret"></i></footer>
    </section>
    <section class="group g-sync">
        <div class="tools">
            <button class="big dim"><svg><use href="#i-move"/></svg>移动面</button>
            <div class="list">
                <button class="line dim"><svg><use href="#s-face"/></svg>偏置区域</button>
                <button class="line dim"><svg><use href="#s-face"/></svg>替换面</button>
                <button class="line dim"><svg><use href="#s-facex"/></svg>删除面</button>
            </div>
            <button class="big"><span class="box"><svg><use href="#i-cycle"/></svg></span>更多<i class="caret"></i></button>
        </div>
        <footer><span>同步建模</span><i class="caret"></i></footer>
    </section>
    <section class="group g-feature">
        <div class="tools">
            <button class="big dim"><svg><use href="#i-findf"/></svg>查找特征</button>
            <button class="big dim"><svg><use href="#i-featp"/></svg>创建特征工艺</button>
            <button class="big"><span class="box"><svg><use href="#i-feat"/></svg></span>更多<i class="caret"></i></button>
        </div>
        <footer><span>特征</span><i class="caret"></i></footer>
    </section>
</div>

<!-- Selection bar -->
<div class="selbar">
    <button class="menu"><svg><use href="#s-menu"/></svg><span>菜单(<u>M</u>)</span><i class="caret"></i></button>
    <span class="sep"></span>
    <div class="icons">
        <button aria-label="程序顺序视图"><svg><use href="#s-tree1"/></svg></button>
        <button aria-label="机床视图"><svg><use href="#s-tree2"/></svg></button>
        <button aria-label="几何视图"><svg><use href="#s-tree3"/></svg></button>
        <button aria-label="加工方法视图"><svg><use href="#s-tree4"/></svg></button>
    </div>
    <span class="sep"></span>
    <div class="icons">
        <button aria-label="查找工序"><svg><use href="#s-wave"/></svg></button>
        <button aria-label="全部展开"><svg><use href="#s-stack"/></svg></button>
    </div>
    <span class="sep"></span>
    <div class="filters">
        <div class="select filter"><select aria-label="选择过滤器"><option>无选择过滤器</option></select></div>
        <div class="select scope"><select aria-label="选择范围"><option>整个装配</option></select></div>
        <div class="select rule"><select aria-label="曲线规则"><option>单条曲线</option></select></div>
        <div class="select body"><select aria-label="体规则" disabled><option>单个体</option></select></div>
        <button aria-label="应用"><svg><use href="#s-go"/></svg></button>
    </div>
    <span class="sep"></span>
    <div class="icons view">
        <button aria-label="适合窗口"><svg><use href="#s-fit"/></svg></button>
        <button aria-label="平移"><svg><use href="#s-pan"/></svg></button>
        <button aria-label="旋转"><svg><use href="#s-rot"/></svg></button>
        <button aria-label="布局"><svg><use href="#s-tile"/></svg><i class="caret"></i></button>
        <button aria-label="着色"><svg><use href="#s-shade"/></svg><i class="caret"></i></button>
        <button aria-label="定向视图"><svg><use href="#s-cube"/></svg><i class="caret"></i></button>
        <button aria-label="剪切截面"><svg><use href="#s-clip"/></svg><i class="caret"></i></button>
    </div>
    <span class="sep"></span>
</div>

<main>
    <!-- Resource bar -->
    <nav class="resources">
        <button class="gear" aria-label="资源条选项"><svg><use href="#r-gear"/></svg></button>
        <button aria-label="装配导航器"><svg><use href="#r-asm"/></svg></button>
        <button aria-label="约束导航器"><svg><use href="#r-cons"/></svg></button>
        <button aria-label="部件导航器"><svg><use href="#r-part"/></svg></button>
        <button class="current" aria-label="工序导航器"><svg><use href="#r-op"/></svg></button>
        <button aria-label="机床导航器"><svg><use href="#r-mach"/></svg></button>
        <button aria-label="加工单元"><svg><use href="#r-cell"/></svg></button>
        <button aria-label="重用库"><svg><use href="#r-book"/></svg></button>
        <button aria-label="视图管理器"><svg><use href="#r-eye"/></svg></button>
        <button class="tall first" aria-label="消息"><svg><use href="#r-info"/></svg></button>
        <button class="tall" aria-label="浏览器"><svg><use href="#r-web"/></svg></button>
        <button class="after" aria-label="历史记录"><svg><use href="#r-clock"/></svg></button>
        <button aria-label="系统可视化"><svg><use href="#r-color"/></svg></button>
        <button aria-label="加工向导"><svg><use href="#r-wiz"/></svg></button>
        <button aria-label="角色"><svg><use href="#r-tools"/></svg></button>
        <button aria-label="系统场景"><svg><use href="#r-layout"/></svg></button>
    </nav>

    <!-- Operation navigator -->
    <section class="navigator">
        <h2>工序导航器 - 程序顺序</h2>
        <div class="tree">
            <table>
                <colgroup><col class="c-name"><col class="c-chg"><col class="c-path"><col class="c-tool"><col></colgroup>
                <thead><tr><th>名称</th><th>换刀</th><th>刀轨</th><th>刀具</th><th></th></tr></thead>
                <tbody>
                    <tr><td><div class="node root">NC_PROGRAM</div></td><td></td><td></td><td></td><td></td></tr>
                    <tr><td><div class="node"><svg class="branch b1"><path d="M10.500 20V10.500H20"/></svg><svg class="ico"><use href="#t-folder"/></svg><span>未用项</span></div></td><td></td><td></td><td></td><td></td></tr>
                    <tr><td><div class="node"><svg class="branch b1"><path d="M10.500 0V6M15 10.500H20"/><path class="pm" d="M6.500 6.500h8v8h-8z"/><path class="minus" d="M8 10.500h5"/></svg><svg class="warn"><use href="#t-warn"/></svg><svg class="ico"><use href="#t-folder"/></svg><span>PROGRAM</span></div></td><td></td><td></td><td></td><td></td></tr>
                    <tr class="planar"><td><div class="node"><svg class="branch b2"><path d="M29.500 0V20M29.500 10.500H38"/></svg><svg class="warn"><use href="#t-warn"/></svg><svg class="ico"><use href="#t-planar"/></svg><span>PLANAR_PROFILE</span></div></td><td><svg class="chg"><use href="#t-chg"/></svg></td><td><svg class="ok"><use href="#t-ok"/></svg></td><td></td><td></td></tr>
                    <tr><td><div class="node"><svg class="branch b2"><path d="M29.500 0V20M29.500 10.500H38"/></svg><svg class="warn"><use href="#t-warn"/></svg><svg class="ico"><use href="#t-face"/></svg><span>FACE_MILLING</span></div></td><td></td><td><svg class="ok"><use href="#t-ok"/></svg></td><td></td><td></td></tr>
                    <tr><td><div class="node"><svg class="branch b2"><path d="M29.500 0V20M29.500 10.500H38"/></svg><svg class="warn"><use href="#t-warn"/></svg><svg class="ico"><use href="#t-face"/></svg><span>FACE_MILLING_COPY</span></div></td><td></td><td><svg class="ok"><use href="#t-ok"/></svg></td><td></td><td></td></tr>
                    <tr class="selected"><td><div class="node"><svg class="branch b2"><path d="M29.500 0V10.500H38"/></svg><svg class="warn"><use href="#t-warn"/></svg><svg class="ico"><use href="#t-face"/></svg><span>FLOOR_WALL</span></div></td><td></td><td><svg class="ok"><use href="#t-ok"/></svg></td><td></td><td></td></tr>
                </tbody>
            </table>
        </div>
        <div class="hscroll nav-scroll"><svg><use href="#d-left"/></svg><div class="track"><span class="thumb"></span></div><svg><use href="#d-right"/></svg></div>
        <div class="splitter"></div>
        <div class="deps"><span>相依性</span><svg><use href="#d-up"/></svg></div>
    </section>

    <!-- Graphics window -->
    <section class="viewport">
        <svg class="scene" viewBox="634 180 1022 762" preserveAspectRatio="xMidYMid slice">
            <defs>
                <clipPath id="bore"><ellipse cx="1196" cy="393" rx="207" ry="111" transform="rotate(-8 1196 393)"/></clipPath>
            </defs>
            <path d="M634 224h465M1163 224h493M1131.500 180v12" stroke="#8f9494" fill="none"/>
            <!-- plate -->
            <path d="M921 310L965 641 969 641 1452 584 1473 561 1473 541z" fill="#421530"/>
            <path d="M1451 567l21-27 1 20-21 24z" fill="#6d2549"/>
            <path d="M921 312q0-2 3-3L1430 249q3 0 3 2L1472 541l-21 26L966 625z" fill="#cf4c8c"/>
            <!-- ring wall -->
            <path d="M976 398L973 455 1423 422 1412 368z" fill="url(#g-wall)"/>
            <ellipse cx="1198" cy="438" rx="227" ry="127" transform="rotate(-8 1198 438)" fill="url(#g-wall)"/>
            <ellipse cx="1195" cy="393.500" rx="220" ry="122.500" transform="rotate(-8 1195 393.500)" fill="#c94a88" stroke="#8a3762"/>
            <ellipse cx="1195" cy="393.500" rx="217" ry="120" transform="rotate(-8 1195 393.500)" fill="#cf4c8c" stroke="#4a1832"/>
            <!-- bore and floor -->
            <g clip-path="url(#bore)">
                <path d="M980 270h430v250H980z" fill="url(#g-inner)"/>
                <ellipse cx="1200" cy="442" rx="203" ry="108" transform="rotate(-8 1200 442)" fill="#cf4c8c"/>
            </g>
            <ellipse cx="1196" cy="393" rx="209" ry="113" transform="rotate(-8 1196 393)" fill="none" stroke="#7a2c4e"/>
            <ellipse cx="1196" cy="393" rx="207" ry="111" transform="rotate(-8 1196 393)" fill="none" stroke="#fc9560" stroke-width="3.200"/>
            <path d="M1387 356l15 10 13-12" fill="none" stroke="#b8994e" stroke-width="1.500"/>
            <!-- vertical cross hair -->
            <path d="M1131.500 256v386" stroke="#a9a06c"/>
            <path d="M1131.500 256v40M1131.500 620v322" stroke="#dfe3df"/>
            <!-- handle -->
            <path d="M931 357l59 60" stroke="#b3985f" stroke-width="1.200"/>
            <path d="M979 355h4l8 56h-4z" fill="#c9a85a"/>
            <path d="M980 340l6 17h-9z" fill="#c2ac58"/>
            <circle cx="993" cy="373" r="6" fill="url(#g-ball)"/>
            <path d="M982 409l14-1 2 13-14 1z" fill="#00ff10"/>
            <path d="M984 422l14-1-1 5-12 1z" fill="#009a0a"/>
            <!-- triad -->
            <path d="M1197 437L1186 350M1195 420L1189 350" stroke="#2fae3f" stroke-width="1.500"/>
            <path d="M1185 342l-2 19 6 1zM1190 342l-2 24 6 6z" fill="#2fc33f"/>
            <path d="M1197.500 437V402M1195.500 392V372" stroke="#12207e" stroke-width="2"/>
            <path d="M1195 371l-3 7 3 11 3-11zM1196 396l-4 7 4 6 4-6z" fill="#12207e"/>
            <path d="M1197 437l85-9M1201 392l24-3" stroke="#d23b3b" stroke-width="1.500"/>
            <path d="M1280 423l22 2-21 6zM1224 387l26 0-15 4-12 1z" fill="#e03232"/>
            <g class="axis">
                <text x="1189" y="339" fill="#35b13f">YM</text>
                <text x="1197" y="369" fill="#5a3cf0">ZC</text>
                <text x="1198" y="394" fill="#5a3cf0">ZM</text>
                <text x="1238" y="381" fill="#d23b50">XC</text>
                <text x="1285" y="419" fill="#d23b50">XM</text>
            </g>
            <!-- view triad -->
            <path d="M695 888l27-3 3 33-27 3z" fill="#b2b3b4"/>
            <path d="M699 921l-5-38" stroke="#3f9a48"/><path d="M694 879l2 16h-3z" fill="#3f9a48"/>
            <path d="M703 921l25-3" stroke="#c23030" stroke-width="2"/><path d="M724 915l20 1-20 4z" fill="#e83232"/>
            <path d="M699 919v-14" stroke="#0a2aa0" stroke-width="3"/><circle cx="699" cy="907" r="3" fill="#0a2aa0"/>
            <circle cx="699" cy="922" r="4" fill="#e3e6ee"/>
            <g class="axis">
                <text x="690" y="881" fill="#3f9a48">Y</text>
                <text x="695" y="905" fill="#3c50f0">Z</text>
                <text x="744" y="921" fill="#e84040">X</text>
            </g>
        </svg>
        <label class="float-input"><i class="grip"></i><span>余量</span><input type="text" value="0.0000000"></label>
        <div class="ime">
            <svg class="sogou" viewBox="0 0 28 28"><path d="M1 5l21-4 5 20-21 6z" fill="#e8532a" stroke="#b93a18"/><path d="M20 8C12 4 6 9 10 12s12 1 9 6-9 3-12 1" fill="none" stroke="#fff" stroke-width="3.500"/></svg>
            <b>英</b>
            <svg viewBox="0 0 16 16"><path d="M10 2c2 6-2 10-8 9 3 5 12 4 12-3 0-3-2-5-4-6z"/></svg>
            <svg viewBox="0 0 16 16"><circle cx="5" cy="5" r="1.800"/><path d="M10 8h3c0 3-1 4-3 5l-.5-1c1 0 1-1 1-2z"/></svg>
            <svg viewBox="0 0 16 16"><path d="M0 3h16v11H0z"/><path d="M2 6h12M2 8.500h12" stroke="#fff" stroke-dasharray="2 1.200" stroke-width="1.400"/><path d="M4 11.500h8" stroke="#fff" stroke-width="1.400"/></svg>
            <svg class="off" viewBox="0 0 16 16"><circle cx="7" cy="4" r="3.200"/><path d="M1 14c0-8 12-8 12 0z"/><path d="M9 9h6v6H9z" fill="#fff" stroke="#aab4c4"/></svg>
            <svg viewBox="0 0 16 16"><path d="M1 4l4-3c1 2 5 2 6 0l4 3-1 4-2-1v8H4V7L2 8z"/></svg>
            <svg viewBox="0 0 16 16"><path d="M3 14l6-6 5 6z"/></svg>
        </div>
        <svg class="watermark" viewBox="0 0 300 102">
            <path d="M43 2l43 24.500v48L43 99 0 74.500v-48z" fill="#376ca6" transform="translate(2)"/>
            <path d="M57 9l31 17.500v48L45 99 20 84c10-2 20-4 42-12 8-20 6-40-5-63z" fill="#3f93b9"/>
            <path d="M45 2l43 24.500v48L45 99 2 74.500v-48z" fill="none" stroke="#e4e6ea" stroke-width="2.500"/>
            <path d="M57 10c9 18 11 36 7 56M87 45c-4 15-13 27-26 34M65 79c-12 3-26 0-38-8M29 90c-6-14-7-31-3-43M4 59c4-14 12-22 22-24M3 25c14-7 34-3 46 4" fill="none" stroke="#b9cfe0"/>
            <path d="M45 26l20 11v25L45 73 25 62V37z" fill="#376ca6" stroke="#e4e6ea" stroke-width="4"/>
            <path d="M45 50l18-11v23L45 71z" fill="#3f93b9"/><path d="M27 40l18 10 18-10M45 50v21" fill="none" stroke="#c9dcea"/>
            <text x="93" y="61" class="wm-name">3D世界网</text>
            <text x="96" y="80" class="wm-url">WWW.3DSJW.COM</text>
        </svg>
    </section>
</main>

<!-- Trim boundary dialog -->
<form class="dialog">
    <header><svg><use href="#r-gear"/></svg><h2>修剪边界</h2><button type="button" aria-label="重置"><svg><use href="#d-reset"/></svg></button><button type="button" aria-label="关闭"><svg><use href="#i-x"/></svg></button></header>
    <section class="panel">
        <h3>边界<svg><use href="#d-up"/></svg></h3>
        <div class="pick"><span class="pick-text"><svg><use href="#t-ok"/></svg>选择曲线 (1)</span><button type="button" aria-label="曲线"><svg><use href="#d-curve"/></svg></button></div>
        <div class="field"><label for="side">修剪侧</label><div class="select"><select id="side"><option>内侧</option></select></div></div>
        <div class="field"><label for="plane">平面</label><div class="select"><select id="plane"><option>自动</option></select></div></div>
        <div class="box-group data">
            <h4>定制边界数据<svg><use href="#d-up"/></svg></h4>
            <label class="check"><input type="checkbox" checked><span>余量</span></label>
            <div class="stock"><label for="stock">余量</label><input id="stock" type="text" value="0.000000"></div>
        </div>
        <div class="field add"><span>添加新集</span><button type="button" aria-label="添加新集"><svg><use href="#d-add"/></svg></button></div>
        <div class="box-group">
            <h4>列表<svg><use href="#d-up"/></svg></h4>
            <div class="list-row">
                <div class="grid-box">
                    <table>
                        <colgroup><col class="w100"><col class="w100"><col></colgroup>
                        <thead><tr><th>方法</th><th>类型</th><th>修剪侧</th></tr></thead>
                        <tbody>
                            <tr class="selected"><td>曲线</td><td>封闭</td><td>内侧</td></tr>
                            <tr><td></td><td></td><td></td></tr>
                            <tr><td></td><td></td><td></td></tr>
                        </tbody>
                    </table>
                    <div class="hscroll"><svg><use href="#d-left"/></svg><div class="track"><span class="thumb t60"></span></div><svg><use href="#d-right"/></svg></div>
                </div>
                <button type="button" class="del" aria-label="移除"><svg><use href="#d-del"/></svg></button>
            </div>
        </div>
        <div class="field info"><span>信息</span><button type="button" aria-label="信息"><svg><use href="#d-info"/></svg></button></div>
    </section>
    <section class="panel">
        <h3>成员<svg><use href="#d-up"/></svg></h3>
        <div class="box-group">
            <h4>列表<svg><use href="#d-up"/></svg></h4>
            <div class="list-row">
                <div class="grid-box">
                    <table>
                        <colgroup><col class="w70"><col class="w70"><col class="w70"><col></colgroup>
                        <thead><tr><th>Item</th><th>余量</th><th>连接</th><th></th></tr></thead>
                        <tbody>
                            <tr><td>Member 1</td><td>0.000000</td><td>延伸</td><td></td></tr>
                            <tr><td></td><td></td><td></td><td></td></tr>
                            <tr><td></td><td></td><td></td><td></td></tr>
                        </tbody>
                    </table>
                    <div class="hscroll"><svg><use href="#d-left"/></svg><div class="track"><span class="thumb t90"></span></div><svg><use href="#d-right"/></svg></div>
                </div>
            </div>
        </div>
    </section>
    <footer><button type="submit" class="primary">确定</button><button type="button">取消</button></footer>
    <!-- pen mark round the two drop-downs -->
    <svg class="ink" viewBox="0 0 150 104"><path d="M1 19L29 10Q46 5 79 5q26 0 37 3 8 4 16 15 11 9 12 18 2 14-1 27-5 11-17 20-18 11-47 13-26 0-40-4-12-5-17-14Q15 72 13 60 9 50 9 35 9 18 10 11h5"/></svg>
</form>

</body>
</html>
```

FILE: styles.css
```css
* {
    box-sizing: border-box;
}
body {
    margin: 0;
    height: 100vh;
    display: flex;
    flex-direction: column;
    overflow: hidden;
    background: #fff;
    color: #222;
    font: 12px/16px "Noto Sans", "Noto Sans CJK SC", sans-serif;
}
h1, h2, h3, h4 {
    margin: 0;
    font-weight: normal;
}
button, input, select {
    font: inherit;
    color: inherit;
}
button {
    padding: 0;
    border: 0;
    background: none;
    display: inline-flex;
    align-items: center;
    justify-content: center;
    white-space: nowrap;
}
svg {
    width: 18px;
    height: 18px;
    flex: none;
    display: block;
}
.sprite {
    position: absolute;
    width: 0;
    height: 0;
}
.caret {
    flex: none;
    width: 7px;
    height: 4px;
    background: #222;
    clip-path: polygon(0 0, 100% 0, 50% 100%);
}
.sep {
    flex: none;
    width: 1px;
    height: 22px;
    background: #d8d8d8;
}
.dim {
    color: #b4b4b4;
}

/* title bar */
.titlebar {
    flex: none;
    height: 26px;
    display: flex;
    align-items: center;
    position: relative;
    overflow: hidden;
    gap: 6px;
}
.brand {
    width: 32px;
    font: bold 21px/26px "Open Sans", sans-serif;
    color: #7f97a8;
}
.titlebar .qa svg {
    width: 17px;
    height: 17px;
}
.titlebar .sep {
    margin: 0 -1px;
}
.titlebar .wide {
    margin: 0 1px;
}
.titlebar .text {
    font-size: 11px;
    gap: 5px;
}
.caret.bar {
    height: 7px;
    clip-path: polygon(0 0, 100% 0, 100% 15%, 0 15%, 0 45%, 100% 45%, 50% 100%, 0 45%);
}
.titlebar h1 {
    flex: 1;
    font-size: 12px;
    text-align: center;
    white-space: nowrap;
    text-spacing-trim: space-all;
    color: #111;
}
.siemens {
    font: bold 14px/16px "Noto Sans", sans-serif;
    color: #0a9494;
    padding-top: 3px;
}
.winbtns {
    display: flex;
    gap: 10px;
    margin-left: 18px;
    margin-right: -12px;
    color: #444;
}
.winbtns svg {
    width: 14px;
    height: 14px;
}
.progress {
    position: absolute;
    top: 0;
    right: 95px;
    width: 104px;
    height: 3px;
    background: linear-gradient(90deg, #2e86cf 30%, #8fc6f5 30%);
    border-radius: 0 0 3px 3px;
}

/* tabs */
.tabs {
    flex: none;
    height: 28px;
    display: flex;
    overflow: hidden;
    background: #dadada;
    font-size: 13px;
    line-height: 27px;
}
.tabs a {
    padding: 0 13px;
    color: #222;
    text-decoration: none;
    white-space: nowrap;
}
.tabs .file {
    width: 75px;
    margin-right: 2px;
    background: #4f9cb5;
    color: #fff;
}
.tabs .active {
    background: #fff;
    color: #16647c;
    border-top: 1px solid #b5b5b5;
}
.tabs-right {
    margin-left: auto;
    display: flex;
    align-items: center;
    gap: 10px;
    font-size: 11px;
}
.tabs-right svg {
    width: 16px;
    height: 16px;
}
.search {
    width: 124px;
    height: 20px;
    margin-right: 2px;
    display: flex;
    align-items: center;
    background: #fff;
    border: 1px solid #9c9c9c;
}
.search input {
    width: 100%;
    min-width: 0;
    border: 0;
    padding: 0 1px;
    background: none;
}
.search input::placeholder {
    color: #999;
}
.tabs-right .tutorial {
    gap: 4px;
}
.tabs-right .winbtns {
    margin-left: -4px;
    margin-right: -10px;
    gap: 8px;
    color: #222;
}
.tabs-right .winbtns svg {
    width: 14px;
    height: 14px;
}

/* ribbon */
.ribbon {
    flex: none;
    height: 95px;
    display: flex;
    padding: 4px 0 3px;
    border-bottom: 1px solid #d5d5d5;
    font-size: 11px;
    line-height: 14px;
    overflow: hidden;
}
.group {
    flex: none;
    display: flex;
    flex-direction: column;
    border-right: 1px solid #d5d5d5;
}
.tools {
    flex: 1;
    display: flex;
    align-items: flex-start;
    justify-content: center;
}
.group footer {
    display: flex;
    align-items: center;
    color: #16647c;
    line-height: 14px;
}
.group footer span {
    flex: 1;
    text-align: center;
}
.group footer .caret {
    margin: 0 7px 0 5px;
}
.big {
    flex-direction: column;
    justify-content: flex-start;
}
.big > svg {
    width: 32px;
    height: 32px;
    margin: 1px 0 5px;
}
.big .caret {
    margin-top: 5px;
}
.box {
    width: 38px;
    height: 34px;
    margin-bottom: 4px;
    display: flex;
    align-items: center;
    justify-content: center;
    border: 1px solid #d0d0d0;
    border-radius: 3px;
}
.small svg {
    width: 17px;
    height: 17px;
}
.stack {
    display: flex;
    flex-direction: column;
    gap: 6px;
}
.g-insert {
    width: 204px;
}
.g-insert .tools {
    gap: 9px;
    padding-right: 1px;
}
.g-action {
    width: 55px;
}
.g-oper {
    width: 311px;
}
.g-oper .tools {
    gap: 9px;
    justify-content: flex-start;
    padding-left: 12px;
}
.g-oper .report {
    margin-left: 7px;
}
.g-oper .box {
    margin-left: 8px;
}
.g-show {
    width: 88px;
}
.g-ipw {
    width: 136px;
}
.tools.grid {
    display: grid;
    grid-template-columns: 38px 38px;
    align-content: start;
    justify-content: start;
    gap: 2px 0;
    padding-left: 9px;
}
.grid .small {
    justify-content: flex-start;
    height: 20px;
    gap: 7px;
    padding-left: 2px;
}
.small.pressed {
    width: 23px;
    background: #c9e3ea;
}
.g-ipw .tools {
    justify-content: flex-start;
    gap: 19px;
    padding-left: 10px;
}
.g-ipw .grid {
    display: grid;
    grid-template-columns: 25px 25px;
    gap: 2px 0;
}
.g-ipw .big svg {
    width: 28px;
}
.g-analysis {
    width: 67px;
}
.g-geom {
    width: 130px;
}
.g-geom .tools {
    gap: 8px;
}
.g-gc {
    width: 150px;
}
.tools.rows {
    flex-direction: column;
    justify-content: flex-start;
    padding: 7px 0 0 6px;
    gap: 13px;
}
.row {
    display: flex;
    gap: 6px;
}
.row .sep {
    height: 18px;
    margin: 0 -1px;
}
.g-sync {
    width: 172px;
}
.g-sync .tools {
    gap: 10px;
    padding-left: 6px;
}
.list {
    display: flex;
    flex-direction: column;
    align-items: flex-start;
    gap: 6px;
}
.line {
    gap: 4px;
    height: 16px;
}
.line svg {
    width: 16px;
    height: 16px;
}
.g-feature {
    width: 185px;
}
.g-feature .tools {
    gap: 11px;
    padding-left: 6px;
}

/* drop-downs */
.select {
    position: relative;
    background: #fff;
    border: 1px solid #9c9c9c;
}
.select select {
    appearance: none;
    width: 100%;
    height: 100%;
    padding: 0 20px 0 2px;
    border: 0;
    background: none;
    color: #111;
    opacity: 1;
}
.select::after {
    content: "";
    position: absolute;
    right: 5px;
    top: 50%;
    margin-top: -2px;
    width: 7px;
    height: 4px;
    background: #222;
    clip-path: polygon(0 0, 100% 0, 50% 100%);
    pointer-events: none;
}

/* selection bar */
.selbar {
    flex: none;
    height: 31px;
    display: flex;
    align-items: center;
    padding-top: 1px;
    border-bottom: 2px solid #9a9a9a;
    font-size: 11px;
}
.selbar .menu {
    padding: 0 7px 0 4px;
    gap: 3px;
}
.selbar .menu .caret {
    margin-left: 3px;
}
.selbar svg {
    width: 17px;
    height: 17px;
}
.icons {
    display: flex;
    gap: 8px;
    padding: 0 10px 0 11px;
}
.selbar .view {
    gap: 7px;
}
.selbar .icons button {
    gap: 6px;
}
.filters {
    display: flex;
    align-items: center;
    padding: 0 10px 0 11px;
}
.filters .select {
    height: 20px;
}
.filters .filter {
    width: 133px;
    margin-right: 9px;
}
.filters .scope {
    width: 160px;
}
.filters .rule {
    width: 142px;
    margin: 0 10px 0 206px;
}
.filters .body {
    width: 140px;
    margin-right: 9px;
}
.select:has(select:disabled) select {
    color: #999;
}
.select:has(select:disabled)::after {
    background: #999;
}

main {
    flex: 1;
    min-height: 0;
    display: flex;
}

/* resource bar */
.resources {
    flex: none;
    width: 26px;
    display: flex;
    flex-direction: column;
    background: #dadada;
    border-right: 1px solid #9c9c9c;
}
.resources button {
    flex: none;
    height: 42px;
    justify-content: flex-start;
}
.resources svg {
    width: 24px;
    height: 24px;
}
.resources .gear {
    height: 26px;
    margin-bottom: 16px;
    padding-left: 1px;
}
.resources .gear svg {
    width: 15px;
    height: 15px;
}
.resources .current {
    background: #fff;
    margin-right: -1px;
}
.resources .tall {
    height: 54px;
}
.resources .first, .resources .after {
    margin-top: 6px;
}

/* navigator */
.navigator {
    flex: none;
    width: 608px;
    padding: 0 9px 0 6px;
    display: flex;
    flex-direction: column;
    overflow: hidden;
}
.navigator h2 {
    padding: 7px 0 6px 4px;
    font-size: 12px;
}
.tree {
    flex: 1;
    min-height: 0;
    overflow: hidden;
    border: solid #c9c9c9;
    border-width: 1px 1px 0;
    background:
        linear-gradient(#000, #000) 316px 20px / 1px 100% no-repeat,
        linear-gradient(#ddd, #ddd) 416px 0 / 1px 100% no-repeat,
        linear-gradient(#ddd, #ddd) 466px 0 / 1px 100% no-repeat,
        linear-gradient(#ddd, #ddd) 566px 0 / 1px 100% no-repeat,
        repeating-linear-gradient(#fff 0 19px, #e4e4e4 19px 20px, #f9f9f9 20px 39px, #e4e4e4 39px 40px) 0 20px;
}
table {
    width: 100%;
    table-layout: fixed;
    border-collapse: collapse;
}
th, td {
    padding: 0;
    font-weight: normal;
    text-align: left;
    white-space: nowrap;
    overflow: hidden;
}
.tree th {
    height: 20px;
    padding-left: 6px;
    background: #efefef;
    border-right: 1px solid #ccc;
}
.tree td {
    height: 20px;
}
.c-name {
    width: 317px;
}
.c-chg, .c-tool {
    width: 100px;
}
.c-path {
    width: 50px;
}
.node {
    height: 19px;
    display: flex;
    align-items: center;
}
.node.root {
    padding-left: 4px;
}
.node span {
    flex: 1;
    padding-left: 3px;
    line-height: 19px;
}
.node .ico {
    width: 16px;
    height: 16px;
}
.node .warn {
    width: 8px;
    height: 17px;
    margin: 0 4px;
}
.branch {
    height: 20px;
    fill: none;
    stroke: #999;
    stroke-dasharray: 1 1;
}
.branch .pm {
    stroke: #c4c4c4;
    stroke-dasharray: none;
}
.branch .minus {
    stroke: #333;
    stroke-dasharray: none;
}
.b1 {
    width: 20px;
}
.b2 {
    width: 39px;
}
.planar .node {
    color: #6a3fb0;
}
.chg {
    width: 8px;
    height: 14px;
    margin-left: 9px;
}
.ok {
    width: 12px;
    height: 12px;
    margin-left: 5px;
}
.tree .selected span, .tree .selected td + td {
    background: #8cbfcf;
}
.tree .selected td + td {
    border-right: 1px solid #fff;
}
.hscroll {
    height: 15px;
    display: flex;
    align-items: center;
    background: #efefef;
}
.hscroll svg {
    width: 16px;
    height: 12px;
}
.track {
    flex: 1;
    height: 100%;
}
.thumb {
    display: block;
    width: 50%;
    height: 100%;
    background: #c9c9c9;
}
.thumb.t60 {
    width: 62%;
}
.thumb.t90 {
    width: 87%;
}
.nav-scroll {
    margin: 0 0 4px 1px;
}
.nav-scroll svg {
    width: 18px;
}
.splitter {
    flex: none;
    height: 5px;
    background: #dadada;
    border: solid #a5a5a5;
    border-width: 1px 1px 1px 0;
}
.deps {
    flex: none;
    height: 8px;
    display: flex;
    justify-content: space-between;
    padding: 3px 4px 0 8px;
    overflow: hidden;
    color: #16647c;
}

/* graphics window */
.viewport {
    flex: 1;
    min-width: 0;
    position: relative;
    overflow: hidden;
    background: linear-gradient(#222425, #3e4041 45%, #525455 70%, #565859);
}
.scene {
    width: 100%;
    height: 100%;
}
.axis {
    font: 12px "Noto Sans", sans-serif;
}
.float-input {
    position: absolute;
    left: 181px;
    top: 155px;
    height: 31px;
    display: flex;
    align-items: center;
    gap: 1px;
    padding: 0 3px;
    background: #f0f0f0;
    border: 1px solid #fff;
}
.float-input input {
    width: 66px;
    height: 23px;
    padding: 0 4px;
    border: 1px solid #999;
    background: #fff;
}
.grip {
    width: 7px;
    height: 22px;
    margin-right: 8px;
    background: radial-gradient(#999 1px, transparent 1px) 0 0 / 4px 4px;
}
.ime {
    position: absolute;
    right: -18px;
    top: 608px;
    height: 24px;
    padding-right: 4px;
    display: flex;
    align-items: center;
    gap: 6px;
    background: #fff;
    color: #2468b4;
    fill: #2468b4;
    font-size: 14px;
}
.ime svg {
    width: 16px;
    height: 16px;
}
.ime .sogou {
    width: 28px;
    height: 28px;
}
.ime .off {
    fill: #aab4c4;
}
.watermark {
    position: absolute;
    right: 3px;
    bottom: 3px;
    width: 300px;
    height: 102px;
}
.watermark text {
    fill: #3f93b9;
    stroke: #e4e6ea;
    stroke-width: 3px;
    paint-order: stroke;
}
.wm-name {
    font: bold 47px "Open Sans", "Noto Sans CJK SC", sans-serif;
}
.wm-url {
    font: bold 18px "DejaVu Sans", sans-serif;
}

/* dialog */
.dialog {
    position: absolute;
    left: 459px;
    top: 98px;
    width: 328px;
    background: #efefef;
    border: 1px solid #d2d2d2;
    border-top: 0;
}
.dialog > header {
    height: 24px;
    margin: 0 -1px 4px;
    padding: 0 9px 0 8px;
    display: flex;
    align-items: center;
    gap: 6px;
    background: #569fb7;
    color: #fff;
}
.dialog > header svg {
    width: 14px;
    height: 14px;
}
.dialog > header h2 {
    flex: 1;
    padding-left: 4px;
    font-size: 13px;
}
.panel {
    margin: 0 5px 3px;
    padding: 0 9px 8px;
    background: #fff;
    border-bottom: 1px solid #c4c4c4;
}
.panel h3, .panel h4 {
    display: flex;
    justify-content: space-between;
    align-items: center;
    color: #16647c;
}
.panel h3 {
    height: 26px;
    margin: 0 -4px 4px -3px;
    font-size: 14px;
}
.panel h3 svg {
    width: 13px;
    height: 13px;
}
.panel h4 svg {
    width: 12px;
    height: 12px;
}
.pick {
    height: 32px;
    display: flex;
    gap: 2px;
    margin-bottom: 3px;
}
.pick-text {
    flex: 1;
    display: flex;
    align-items: center;
    gap: 5px;
    padding-left: 2px;
    background: #ffe079;
}
.pick-text svg {
    width: 13px;
    height: 13px;
}
.pick button {
    width: 32px;
    background: #ffe079;
}
.pick button svg {
    width: 22px;
    height: 22px;
}
.field {
    display: flex;
    align-items: center;
    justify-content: space-between;
    margin-bottom: 2px;
}
.field .select {
    width: 141px;
    height: 24px;
}
.field select {
    padding-left: 4px;
}
.field button, .del {
    width: 24px;
    height: 24px;
    background: #fff;
    border: 1px solid #9c9c9c;
}
.field.add {
    margin-bottom: 1px;
}
.box-group {
    padding: 0 8px 8px;
    background: #efefef;
    border: 1px solid #d5d5d5;
    margin-bottom: 2px;
}
.box-group h4 {
    height: 24px;
    margin-right: -3px;
}
.check {
    display: flex;
    align-items: center;
    gap: 5px;
    margin: 8px 0 5px;
}
.check input {
    appearance: none;
    width: 13px;
    height: 13px;
    margin: 0;
    border: 1px solid #333;
    background: #fff;
}
.check input:checked::before {
    content: "";
    display: block;
    width: 4px;
    height: 7px;
    margin: 0 0 0 3px;
    border: solid #333;
    border-width: 0 1px 1px 0;
    transform: rotate(40deg);
}
.stock {
    display: flex;
    align-items: center;
    justify-content: space-between;
}
.stock input {
    width: 82px;
    height: 23px;
    padding: 2px 3px;
    border: 1px solid #9c9c9c;
    background: linear-gradient(#3399ff, #3399ff) content-box, #fff;
    color: #fff;
    font: 14px "Liberation Mono", monospace;
    text-indent: 18px;
}
.list-row {
    display: flex;
    align-items: flex-start;
    gap: 2px;
    margin-top: 6px;
}
.grid-box {
    flex: 1;
    padding: 1px;
    background: #fff;
    border: 1px solid #ccc;
}
.grid-box th {
    height: 21px;
    padding-left: 6px;
    background: #efefef;
    border-right: 1px solid #ccc;
    border-bottom: 1px solid #ccc;
}
.grid-box td {
    height: 20px;
    padding-left: 4px;
    border-right: 1px solid #e4e4e4;
    border-bottom: 1px solid #e4e4e4;
}
.grid-box tr:nth-child(even) td {
    background: #f9f9f9;
}
.grid-box .selected td {
    background: #8cbfcf;
    border-right-color: #fff;
}
.grid-box tr:last-child td {
    height: 18px;
    border-bottom: 0;
}
.grid-box th:last-child, .grid-box td:last-child {
    border-right: 0;
}
.w100 {
    width: 100px;
}
.w70 {
    width: 70px;
}
.field.info button {
    width: 32px;
    height: 32px;
}
.field.info svg {
    width: 20px;
    height: 20px;
}
.field.info {
    margin: 3px 0 0;
}
.dialog > footer {
    display: flex;
    justify-content: flex-end;
    gap: 5px;
    padding: 8px 15px 10px;
}
.dialog > footer button {
    width: 54px;
    height: 25px;
    border: 1px solid #a5a5a5;
    background: #dcdcdc;
}
.dialog > footer .primary {
    background: #74b3c8;
    border-color: #74b3c8;
    color: #fff;
}
.ink {
    position: absolute;
    left: 156px;
    top: 69px;
    width: 150px;
    height: 104px;
    fill: none;
    stroke: #000;
    stroke-width: 2px;
    pointer-events: none;
}
```
